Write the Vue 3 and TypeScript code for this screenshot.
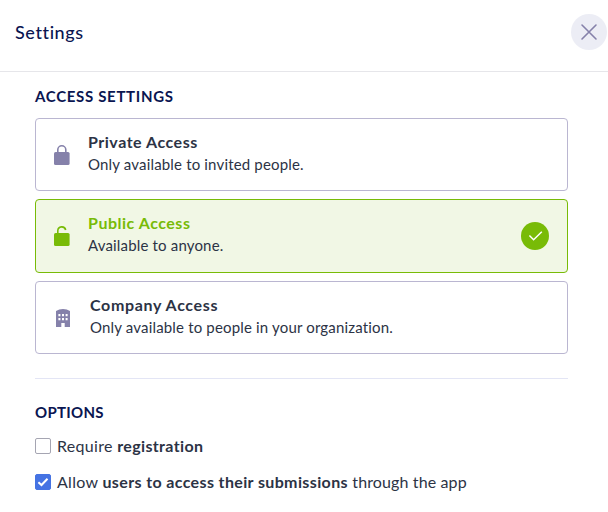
<script setup lang="ts">
import { ref } from 'vue'

type AccessId = 'private' | 'public' | 'company'

interface AccessOption {
  id: AccessId
  title: string
  description: string
}

const accessOptions: AccessOption[] = [
  { id: 'private', title: 'Private Access', description: 'Only available to invited people.' },
  { id: 'public', title: 'Public Access', description: 'Available to anyone.' },
  { id: 'company', title: 'Company Access', description: 'Only available to people in your organization.' },
]

const selected = ref<AccessId>('public')
const requireRegistration = ref(false)
const allowSubmissions = ref(true)
</script>

<template>
  <div class="panel">
    <header class="header">
      <h1 class="title">Settings</h1>
      <button class="close" type="button" aria-label="Close">
        <svg width="36" height="36" viewBox="0 0 36 36">
          <path d="M11 11L25 25M25 11L11 25" fill="none" stroke="#8581aa" stroke-width="1.6" stroke-linecap="round" />
        </svg>
      </button>
    </header>

    <main class="content">
      <h2 class="section-title access">ACCESS SETTINGS</h2>
      <div class="cards">
        <button
          v-for="option in accessOptions"
          :key="option.id"
          type="button"
          class="card"
          :class="[option.id, { selected: selected === option.id }]"
          @click="selected = option.id"
        >
          <svg v-if="option.id === 'private'" class="icon" width="16" height="20" viewBox="0 0 16 20">
            <path d="M3.8 8V4.8a4 4 0 0 1 8 0V8" fill="none" stroke="currentColor" stroke-width="1.6" />
            <rect x="0" y="7" width="15.6" height="13" rx="1.6" fill="currentColor" />
          </svg>
          <svg v-else-if="option.id === 'public'" class="icon" width="16" height="20" viewBox="0 0 16 20">
            <path d="M3.8 8V4.8a4 4 0 0 1 7.9-.8" fill="none" stroke="currentColor" stroke-width="1.6" />
            <rect x="0" y="7" width="15.6" height="13" rx="1.6" fill="currentColor" />
          </svg>
          <svg v-else class="icon" width="14" height="18" viewBox="0 0 14 18">
            <path
              fill="currentColor"
              fill-rule="evenodd"
              d="M0 2Q3 .2 7 0Q11 .2 14 2V18H8.7V14H5.3V18H0ZM2.4 5v2.2h2V5ZM6 5v2.2h2V5ZM9.6 5v2.2h2V5ZM2.4 9v2.2h2V9ZM6 9v2.2h2V9ZM9.6 9v2.2h2V9Z"
            />
          </svg>
          <span class="text">
            <span class="name">{{ option.title }}</span>
            <span class="description">{{ option.description }}</span>
          </span>
          <svg v-if="selected === option.id" class="badge" width="28" height="28" viewBox="0 0 28 28">
            <circle cx="14" cy="14" r="14" fill="#78bb07" />
            <path d="M8.4 13.4L12.6 17.8L20.8 9.8" fill="none" stroke="#fff" stroke-width="1.5" />
          </svg>
        </button>
      </div>

      <section class="options">
        <h2 class="section-title">OPTIONS</h2>
        <label class="option">
          <input v-model="requireRegistration" type="checkbox" />
          <span class="box"><svg width="16" height="16" viewBox="0 0 16 16"><path d="M3.4 8.2L6.5 11L12.5 4.8" /></svg></span>
          <span class="label">Require <b>registration</b></span>
        </label>
        <label class="option">
          <input v-model="allowSubmissions" type="checkbox" />
          <span class="box"><svg width="16" height="16" viewBox="0 0 16 16"><path d="M3.4 8.2L6.5 11L12.5 4.8" /></svg></span>
          <span class="label">Allow <b>users to access their submissions</b> <span class="suffix">through the app</span></span>
        </label>
      </section>
    </main>
  </div>
</template>

<style>
body { background: #fff; }
</style>

<style scoped>
.panel {
  height: 512px;
  overflow: hidden;
  background: #fff;
  color: #2c3345;
  font-family: Lato, "Liberation Sans", sans-serif;
}
.header {
  box-sizing: border-box;
  height: 72px;
  padding: 14px 1px 0 15px;
  display: flex;
  align-items: flex-start;
  justify-content: space-between;
  border-bottom: 1px solid #e6e6ea;
}
.title {
  margin: 6px 0 0;
  font-size: 18px;
  line-height: 24px;
  font-weight: 500;
  letter-spacing: 0.6px;
  color: #0a1551;
}
.close {
  width: 36px;
  height: 36px;
  padding: 0;
  border: 0;
  border-radius: 50%;
  background: #ecedf5;
}
.close svg { display: block; }
.content { padding: 14px 40px 0 35px; }
.section-title {
  margin: 0;
  font-size: 15px;
  line-height: 20px;
  font-weight: 700;
  letter-spacing: 0.3px;
  color: #0a1551;
}
.section-title.access { letter-spacing: 0.68px; }
.cards {
  display: grid;
  grid-template-rows: 73px 74px 73px;
  row-gap: 8px;
  margin-top: 12px;
}
.card {
  display: flex;
  align-items: center;
  box-sizing: border-box;
  padding: 0 18px;
  border: 1px solid #bab6d1;
  border-radius: 4px;
  background: #fff;
  color: inherit;
  font-family: inherit;
  text-align: left;
}
.card.selected { border-color: #78bb07; background: #f1f7e5; }
.icon { flex: none; color: #8581aa; }
.selected .icon { color: #78bb07; }
.company .icon { margin-left: 2px; }
.text { flex: 1; display: flex; flex-direction: column; margin-left: 18px; padding-bottom: 4px; }
.company .text { margin-left: 20px; }
.name { font-size: 16px; line-height: 22px; font-weight: 700; letter-spacing: 0.52px; }
.company .name { letter-spacing: 0.65px; }
.selected .name { color: #78bb07; }
.description { font-size: 15px; line-height: 22px; letter-spacing: 0.17px; }
.badge { flex: none; }
.options { margin-top: 24px; padding-top: 23px; border-top: 1px solid #e3e5f5; width: 533px; }
.option { display: flex; align-items: center; height: 36px; font-size: 16px; }
.options .section-title + .option { margin-top: 6px; }
.option input { appearance: none; width: 0; height: 0; margin: 0; }
.box {
  box-sizing: border-box;
  display: flex;
  align-items: center;
  justify-content: center;
  width: 16px;
  height: 16px;
  border: 1px solid #a5a5b2;
  border-radius: 2px;
}
.box svg { flex: none; visibility: hidden; }
.box path { fill: none; stroke: #fff; stroke-width: 2; }
input:checked + .box { border-color: #4573e3; background: #4573e3; }
input:checked + .box svg { visibility: visible; }
.label { margin-left: 6px; padding-bottom: 2px; white-space: nowrap; letter-spacing: 0.3px; }
.label b { letter-spacing: 0.37px; }
.suffix { letter-spacing: 0.12px; }
</style>
